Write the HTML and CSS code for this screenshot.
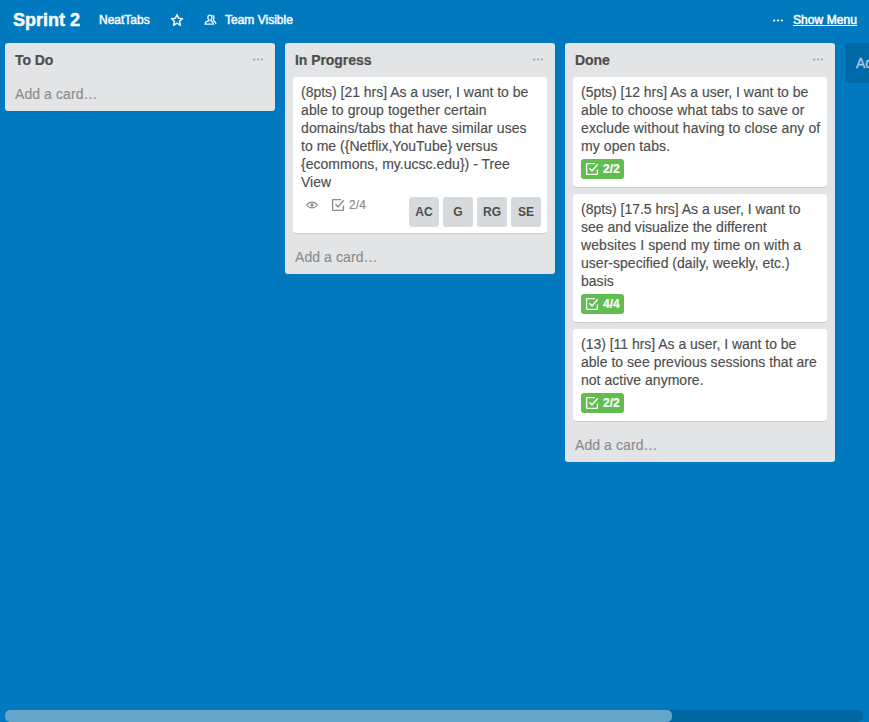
FILE: index.html
```
<!DOCTYPE html>
<html lang="en">
<head>
<meta charset="utf-8">
<title>Sprint 2</title>
<link rel="stylesheet" href="styles.css">
</head>
<body>
<svg class="defs" width="0" height="0" aria-hidden="true">
  <symbol id="check" viewBox="0 0 14 14"><path d="M10 1.600H2.300a.7.7 0 0 0-.7.7v9.400c0 .4.3.7.7.7h9.400c.4 0 .7-.3.7-.7V7.400M4.500 6.200l2.500 2.700 5.700-6.600" fill="none" stroke="currentColor" stroke-width="1.400"/></symbol>
  <symbol id="dots" viewBox="0 0 10 3"><circle cx="1.2" cy="1.5" r="1.1"/><circle cx="5" cy="1.5" r="1.1"/><circle cx="8.8" cy="1.5" r="1.1"/></symbol>
</svg>
<div class="app">
  <header class="board-header">
    <h1 class="board-name">Sprint 2</h1>
    <span class="org">NeatTabs</span>
    <svg class="star" viewBox="0 0 14 14"><path d="M7 1.500l1.600 3.700 4 .4-3 2.700.9 4L7 10.200l-3.500 2.100.9-4-3-2.700 4-.4z" fill="none" stroke="currentColor" stroke-width="1.400" stroke-linejoin="round"/></svg>
    <svg class="team" viewBox="0 0 13 12"><path d="M5.900 1.200c1.300 0 2 .9 2 2.200 0 1.200-.5 2.100-1.100 2.600v.7l1.700 1.200c.6.400.9 1 .9 2.200H1.200c0-1.200.3-1.800.9-2.200L5 6.700V6c-.7-.5-1.100-1.400-1.100-2.600 0-1.300.8-2.200 2-2.200zM8.500 1.300c1.100.2 1.600 1 1.500 2.200 0 .9-.3 1.500-.6 2v.7l1.100 1.100c.9.900 1.300 1.700 1.400 2.800" fill="none" stroke="currentColor" stroke-width="1.300"/></svg>
    <span class="visibility">Team Visible</span>
    <svg class="dots menu-dots"><use href="#dots"/></svg>
    <a class="show-menu">Show Menu</a>
  </header>
  <main class="board">
    <section class="list">
      <div class="list-header"><h2>To Do</h2><svg class="dots"><use href="#dots"/></svg></div>
      <div class="add-card">Add a card…</div>
    </section>
    <section class="list">
      <div class="list-header"><h2>In Progress</h2><svg class="dots"><use href="#dots"/></svg></div>
      <div class="cards">
        <article class="card">
          <p><span class="tight">(8pts) [21 hrs] As a user, I want to be</span><br><span class="loose">able to group together certain</span><br><span class="loose">domains/tabs that have similar uses</span><br>to me ({Netflix,YouTube} versus<br>{ecommons, my.ucsc.edu}) - Tree<br>View</p>
          <div class="meta">
            <svg class="eye" viewBox="0 0 12 8"><path d="M.7 4C3.200.2 8.800.2 11.300 4 8.800 7.800 3.200 7.800.7 4z" fill="none" stroke="currentColor" stroke-width="1.100"/><circle cx="6" cy="4" r="1.700" fill="currentColor"/></svg>
            <span class="badge"><svg class="check"><use href="#check"/></svg>2/4</span>
            <div class="members"><span>AC</span><span>G</span><span>RG</span><span>SE</span></div>
          </div>
        </article>
      </div>
      <div class="add-card">Add a card…</div>
    </section>
    <section class="list">
      <div class="list-header"><h2>Done</h2><svg class="dots"><use href="#dots"/></svg></div>
      <div class="cards">
        <article class="card">
          <p><span class="tight">(5pts) [12 hrs] As a user, I want to be</span><br><span class="loose">able to choose what tabs to save or</span><br><span class="loose">exclude without having to close any of</span><br><span class="loose">my open tabs.</span></p>
          <span class="badge complete"><svg class="check"><use href="#check"/></svg>2/2</span>
        </article>
        <article class="card">
          <p><span class="tight">(8pts) [17.5 hrs] As a user, I want to</span><br>see and visualize the different<br><span class="loose">websites I spend my time on with a</span><br>user-specified (daily, weekly, etc.)<br>basis</p>
          <span class="badge complete"><svg class="check"><use href="#check"/></svg>4/4</span>
        </article>
        <article class="card">
          <p><span class="tight">(13) [11 hrs] As a user, I want to be</span><br>able to see previous sessions that are<br>not active anymore.</p>
          <span class="badge complete"><svg class="check"><use href="#check"/></svg>2/2</span>
        </article>
      </div>
      <div class="add-card">Add a card…</div>
    </section>
    <section class="add-list">Add a list…</section>
  </main>
  <div class="scrollbar"><div class="thumb"></div></div>
</div>
</body>
</html>
```
FILE: styles.css
```
* { box-sizing: border-box; }
body { margin: 0; overflow: hidden; background: #0079bf; color: #4d4d4d; font: 14px/18px "Liberation Sans", Arial, sans-serif; }
h1, h2, p { margin: 0; }
svg { display: block; flex: none; }
.defs { position: absolute; }
.app { height: 722px; display: flex; flex-direction: column; overflow: hidden; }
.board-header { height: 43px; flex: none; display: flex; align-items: center; padding: 0 12px 3px 13px; color: #f6f9fb; font-size: 12px; white-space: nowrap; -webkit-text-stroke: .5px currentColor; }
.board-name { width: 86px; font-size: 18px; line-height: 24px; }
.org { width: 71px; }
.star { width: 14px; height: 14px; margin-right: 20px; }
.team { width: 13px; height: 12px; margin-right: 8px; }
.dots { width: 10px; height: 3px; fill: #a0a0a0; }
.menu-dots { fill: #fff; margin: 0 10px 0 auto; }
.show-menu { text-decoration: underline; letter-spacing: .07px; color: #fff; }
.board { flex: 1; display: flex; align-items: flex-start; gap: 10px; padding-left: 5px; }
.list { flex: none; width: 270px; background: #e2e4e6; border-radius: 3px; }
.list-header { height: 34px; padding: 0 12px 0 10px; display: flex; align-items: center; justify-content: space-between; }
.list-header .dots { margin-top: -1px; }
.list-header h2 { font-size: 14px; line-height: 18px; letter-spacing: -.05px; -webkit-text-stroke: .2px currentColor; }
.cards { padding: 0 8px; display: flex; flex-direction: column; gap: 7px; margin-bottom: 7px; }
.card { background: #fff; border-radius: 3px; padding: 6px 8px; box-shadow: 0 1px 0 #ccc; white-space: nowrap; }
.card p { letter-spacing: .02px; -webkit-text-stroke: .15px currentColor; }
.tight { letter-spacing: -.02px; }
.loose { letter-spacing: .09px; }
.add-card { height: 34px; padding: 8px 10px; color: #8c8c8c; letter-spacing: .08px; -webkit-text-stroke: .15px currentColor; }
.meta { display: flex; height: 37px; margin-bottom: -1px; color: #8c8c8c; }
.eye { width: 12px; height: 8px; margin: 10px 8px 0 5px; }
.badge { display: flex; align-items: center; width: 43px; height: 20px; padding-left: 4px; font-size: 12px; gap: 4px; margin-top: 4px; letter-spacing: .15px; -webkit-text-stroke: .2px currentColor; }
.meta .badge { margin-left: 1px; }
.check { width: 14px; height: 14px; }
.complete { background: #61bd4f; color: #fff; border-radius: 3px; font-weight: bold; margin-bottom: 2px; letter-spacing: 0; }
.members { display: flex; gap: 4px; margin: 6px -2px 0 auto; }
.members span { width: 30px; height: 30px; border-radius: 3px; background: #d6dadc; color: #4d4d4d; text-align: center; font: bold 12px/30px "Liberation Sans", Arial, sans-serif; }
.add-list { flex: none; width: 270px; height: 40px; padding: 11px; border-radius: 3px; background: #006aa8; color: #a6c9df; -webkit-text-stroke: .4px currentColor; }
.scrollbar { flex: none; margin: 0 6px 0 5px; height: 12px; border-radius: 5px; background: #0067a3; }
.thumb { width: 667px; height: 12px; border-radius: 5px; background: #66a5ca; }
```
